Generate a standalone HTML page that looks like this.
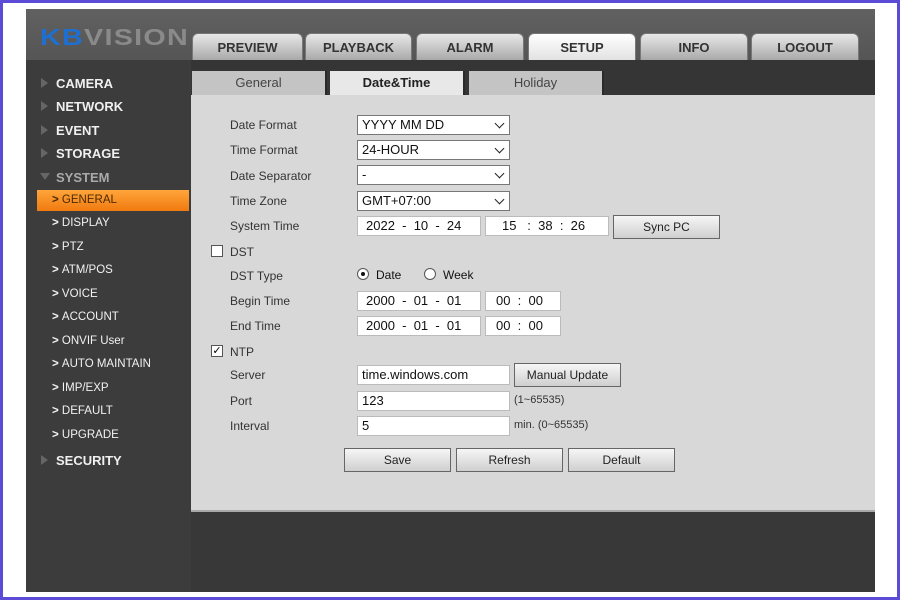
<!DOCTYPE html>
<html><head><meta charset="utf-8"><style>
*{box-sizing:border-box;margin:0;padding:0}
body{width:900px;height:600px;background:#fff;position:relative;overflow:hidden;font-family:"Liberation Sans",Arial,sans-serif}
.frame{position:absolute;left:0;top:0;width:900px;height:600px;border:3px solid #5b4bd6}
.a{position:absolute}
#app{left:26px;top:9px;width:849px;height:583px;background:#383838}
#hdr{left:26px;top:9px;width:849px;height:51px;background:linear-gradient(#616161,#555)}
.logo{left:40px;top:24px;font-size:23px;font-weight:bold;letter-spacing:1px;color:#8a8a8a;transform:scaleX(1.25);transform-origin:left top}
.logo b{color:#1f6fd0}
.tab{top:33px;height:27px;border-radius:6px 6px 0 0;background:linear-gradient(#e8e8e8,#a9a9a9);border:1px solid #777;border-bottom:none;text-align:center;font-weight:bold;font-size:13px;color:#333;line-height:27px}
.tab.on{background:linear-gradient(#fff,#e2e2e2)}
#side{left:26px;top:60px;width:165px;height:532px;background:#3c3c3c}
.m{left:56px;font-size:13px;font-weight:bold;color:#f0f0f0}
.tri{left:41px;width:0;height:0;border-left:7px solid #666;border-top:5px solid transparent;border-bottom:5px solid transparent}
.s{left:52px;font-size:11.5px;color:#f2f2f2}
.s::before{content:"> ";font-weight:bold}
#band{left:191px;top:60px;width:684px;height:35px;background:#353535}
.st{top:71px;height:24px;background:#c4c4c4;text-align:center;font-size:13px;color:#444;line-height:24px;border-right:2px solid #2a2a2a}
.st.on{background:#e8e8e8;font-weight:bold;color:#222}
#pan{left:191px;top:95px;width:684px;height:417px;background:#d8d8d8;border-bottom:2px solid #a8a8a8}
.l{left:230px;font-size:12px;color:#333}
.in{left:357px;height:20px;background:#fff;border:1px solid #bbb;font-size:13px;color:#111;padding-left:4px;line-height:18px}
.sel{width:153px;border:1px solid #777}
.sel::after{content:"";position:absolute;right:6px;top:4px;width:6px;height:6px;border-right:1.5px solid #222;border-bottom:1.5px solid #222;transform:rotate(45deg)}
.btn{height:24px;background:linear-gradient(#f6f6f6,#cfcfcf);border:1px solid #666;font-size:12px;color:#222;text-align:center;line-height:22px}
.cb{left:211px;width:12px;height:12px;background:#fff;border:1px solid #555;font-size:11px;line-height:10px;text-align:center}
.rd{width:12px;height:12px;border-radius:50%;background:#fff;border:1px solid #555}
.t{font-size:13px;color:#111}
</style></head><body>
<div class="a" id="app"></div>
<div class="a" id="hdr"></div>
<div class="a logo"><b>KB</b>VISION</div>
<div class="a tab" style="left:192px;width:111px">PREVIEW</div>
<div class="a tab" style="left:305px;width:107px">PLAYBACK</div>
<div class="a tab" style="left:416px;width:108px">ALARM</div>
<div class="a tab on" style="left:528px;width:108px">SETUP</div>
<div class="a tab" style="left:640px;width:108px">INFO</div>
<div class="a tab" style="left:751px;width:108px">LOGOUT</div>
<div class="a" id="side"></div>
<div class="a tri" style="top:78px"></div><div class="a m" style="top:76px">CAMERA</div>
<div class="a tri" style="top:101px"></div><div class="a m" style="top:99px">NETWORK</div>
<div class="a tri" style="top:125px"></div><div class="a m" style="top:123px">EVENT</div>
<div class="a tri" style="top:148px"></div><div class="a m" style="top:146px">STORAGE</div>
<div class="a" style="left:40px;top:173px;width:0;height:0;border-top:7px solid #666;border-left:5px solid transparent;border-right:5px solid transparent"></div><div class="a m" style="top:170px;color:#aaa">SYSTEM</div>
<div class="a" style="left:37px;top:190px;width:152px;height:21px;background:linear-gradient(#ffa53a,#f07a10)"></div>
<div class="a s" style="top:194px;color:#4a2a00">GENERAL</div>
<div class="a s" style="top:217px">DISPLAY</div>
<div class="a s" style="top:241px">PTZ</div>
<div class="a s" style="top:264px">ATM/POS</div>
<div class="a s" style="top:288px">VOICE</div>
<div class="a s" style="top:311px">ACCOUNT</div>
<div class="a s" style="top:335px">ONVIF User</div>
<div class="a s" style="top:358px">AUTO MAINTAIN</div>
<div class="a s" style="top:382px">IMP/EXP</div>
<div class="a s" style="top:405px">DEFAULT</div>
<div class="a s" style="top:429px">UPGRADE</div>
<div class="a tri" style="top:455px"></div><div class="a m" style="top:453px">SECURITY</div>
<div class="a" id="band"></div>
<div class="a st" style="left:192px;width:135px">General</div>
<div class="a st on" style="left:330px;width:135px">Date&amp;Time</div>
<div class="a st" style="left:469px;width:135px">Holiday</div>
<div class="a" id="pan"></div>
<div class="a l" style="top:118px">Date Format</div><div class="a in sel" style="top:115px">YYYY MM DD</div>
<div class="a l" style="top:143px">Time Format</div><div class="a in sel" style="top:140px">24-HOUR</div>
<div class="a l" style="top:169px">Date Separator</div><div class="a in sel" style="top:165px">-</div>
<div class="a l" style="top:194px">Time Zone</div><div class="a in sel" style="top:191px">GMT+07:00</div>
<div class="a l" style="top:219px">System Time</div>
<div class="a in" style="top:216px;width:124px;padding-left:8px">2022&nbsp; - &nbsp;10&nbsp; - &nbsp;24</div>
<div class="a in" style="left:485px;top:216px;width:124px;padding-left:16px">15&nbsp;&nbsp; : &nbsp;38&nbsp; : &nbsp;26</div>
<div class="a btn" style="left:613px;top:215px;width:107px">Sync PC</div>
<div class="a cb" style="top:245px"></div><div class="a l" style="top:245px">DST</div>
<div class="a l" style="top:269px">DST Type</div>
<div class="a rd" style="left:357px;top:268px"><div class="a" style="left:3px;top:3px;width:4px;height:4px;border-radius:50%;background:#111"></div></div>
<div class="a t" style="left:376px;top:268px;font-size:12px">Date</div>
<div class="a rd" style="left:424px;top:268px"></div>
<div class="a t" style="left:443px;top:268px;font-size:12px">Week</div>
<div class="a l" style="top:294px">Begin Time</div>
<div class="a in" style="top:291px;width:124px;padding-left:8px">2000&nbsp; - &nbsp;01&nbsp; - &nbsp;01</div>
<div class="a in" style="left:485px;top:291px;width:76px;padding-left:10px">00&nbsp; : &nbsp;00</div>
<div class="a l" style="top:319px">End Time</div>
<div class="a in" style="top:316px;width:124px;padding-left:8px">2000&nbsp; - &nbsp;01&nbsp; - &nbsp;01</div>
<div class="a in" style="left:485px;top:316px;width:76px;padding-left:10px">00&nbsp; : &nbsp;00</div>
<div class="a cb" style="top:345px">✓</div><div class="a l" style="top:345px">NTP</div>
<div class="a l" style="top:368px">Server</div><div class="a in" style="top:365px;width:153px">time.windows.com</div>
<div class="a btn" style="left:514px;top:363px;width:107px">Manual Update</div>
<div class="a l" style="top:394px">Port</div><div class="a in" style="top:391px;width:153px">123</div>
<div class="a t" style="left:514px;top:394px;font-size:11px;color:#333">(1~65535)</div>
<div class="a l" style="top:419px">Interval</div><div class="a in" style="top:416px;width:153px">5</div>
<div class="a t" style="left:514px;top:419px;font-size:11px;color:#333">min. (0~65535)</div>
<div class="a btn" style="left:344px;top:448px;width:107px">Save</div>
<div class="a btn" style="left:456px;top:448px;width:107px">Refresh</div>
<div class="a btn" style="left:568px;top:448px;width:107px">Default</div>
<div class="frame"></div>
</body></html>
